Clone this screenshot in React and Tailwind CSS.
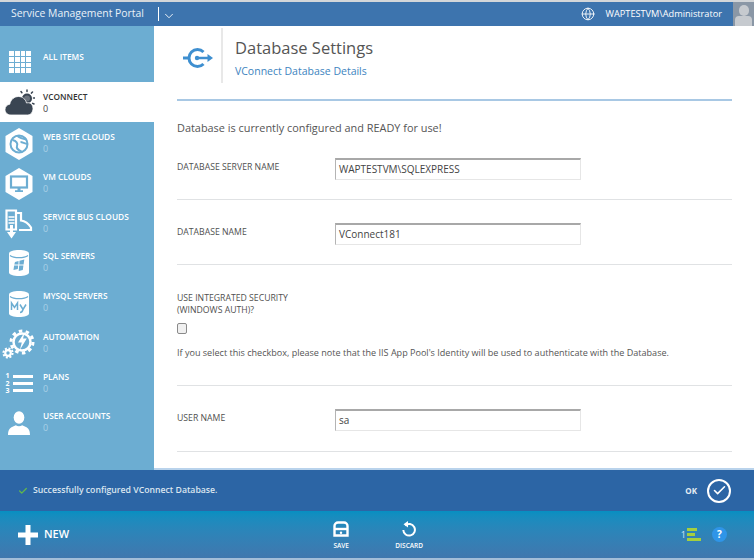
import React from 'react'
import { ChevronDown, Globe, Check } from 'lucide-react'

const FONT = '[font-family:"Open_Sans",sans-serif]'

function GridIcon() {
  return (
    <div className="grid grid-cols-4 gap-px w-[22px] h-[22px]">
      {Array.from({ length: 16 }).map((_, i) => <div key={i} className="bg-white" />)}
    </div>
  )
}

function CloudIcon() {
  return (
    <svg width="30" height="26" viewBox="0 0 30 26" fill="#3a4552">
      <g stroke="#3a4552" strokeWidth="1.500" strokeLinecap="round" strokeDasharray="1.500 1.800" fill="none">
        <path d="M22 1v3M27.500 3l-1.800 2M30 9h-2.500M16 2.500l1.500 2M29 15l-2-1" />
      </g>
      <circle cx="22" cy="9.500" r="5" />
      <circle cx="22" cy="9.500" r="3" fill="#fff" opacity="0.25" />
      <path d="M6 26C2.500 26 0 23.600 0 20.500 0 17.700 2 15.600 4.800 15.200 5.500 10.500 9.500 7.500 13.500 7.500c4 0 7.200 2.800 8 6.500 .6-.2 1.100-.3 1.700-.3 2.900 0 4.800 2.400 4.800 5.800 0 3.700-2.400 6.500-5.500 6.500z" stroke="#fff" strokeWidth="0.800" />
    </svg>
  )
}

function Hexagon({ children }) {
  return (
    <svg width="28" height="32" viewBox="0 0 28 32">
      <path d="M14 0l13.500 8v16L14 32 .5 24V8z" fill="#fff" />
      {children}
    </svg>
  )
}

function WebIcon() {
  return (
    <Hexagon>
      <circle cx="14" cy="16" r="8.500" fill="none" stroke="#6cadd2" strokeWidth="2" />
      <path d="M7.500 12c4 1 5.500 3.500 4.500 6s1 4 4.500 5.500M12.500 8c3 2.500 6 3 9 3.500M15.500 14c2 0 4.500 2 7 2" fill="none" stroke="#6cadd2" strokeWidth="2" />
    </Hexagon>
  )
}

function VmIcon() {
  return (
    <Hexagon>
      <rect x="6" y="8.500" width="16" height="11" fill="none" stroke="#6cadd2" strokeWidth="2.200" />
      <path d="M12.500 20h3v2.200h2.500v1.800h-8v-1.800h2.500z" fill="#6cadd2" />
    </Hexagon>
  )
}

function BusIcon() {
  return (
    <svg width="28" height="30" viewBox="0 0 28 30" fill="none" stroke="#fff" strokeWidth="2.200">
      <path d="M1.500 1.500h9.500v19H1.500z" />
      <path d="M11 4h5v7.500c4 .5 7.500 3 10 7v2.500H14" />
      <path d="M3.500 8h6M3.500 11h6M3.500 14h6" strokeWidth="1.700" />
      <path d="M6.500 16v8" strokeWidth="3" />
      <path d="M2 23h9l-4.500 6.500z" fill="#fff" stroke="none" />
    </svg>
  )
}

function DbShape({ children }) {
  return (
    <svg width="22" height="28" viewBox="0 0 22 28">
      <path d="M1 4.500C1 2.300 5.500 1 11 1s10 1.300 10 3.500v19c0 2.200-4.500 3.500-10 3.500S1 25.700 1 23.500z" fill="#fff" />
      <path d="M2 6.500c2 1.500 5 2.200 9 2.200s7-.7 9-2.200" fill="none" stroke="#6cadd2" strokeWidth="1.300" />
      {children}
    </svg>
  )
}

function SqlIcon() {
  return (
    <DbShape>
      <path d="M7 13l3.500-1v3.500H6.300zM11.500 11.800l4.800-1.300-.7 5H11.300zM6.100 16.500h4.100l-.4 3.600-4.300 1zM11.200 16.500h4.200l-.6 4.600-4.100 1z" fill="#6cadd2" />
    </DbShape>
  )
}

function MysqlIcon() {
  return (
    <DbShape>
      <path d="M3.500 20v-7l3 4.500 3-4.500v7M12 14.500l3 5 3-5M15 19.500c-.5 2-1.500 3-3 3" fill="none" stroke="#6cadd2" strokeWidth="1.500" />
    </DbShape>
  )
}

function AutomationIcon() {
  return (
    <svg width="34" height="30" viewBox="0 0 34 30">
      <circle cx="20" cy="13" r="8.500" fill="none" stroke="#fff" strokeWidth="2.500" />
      <circle cx="20" cy="13" r="11" fill="none" stroke="#fff" strokeWidth="3" strokeDasharray="3.500 3.400" />
      <path d="M23 2.500l-7 11h3.800l-2 7.500 7-11.500H21z" fill="#fff" />
      <circle cx="6" cy="24" r="2.800" fill="none" stroke="#fff" strokeWidth="2.200" />
      <circle cx="6" cy="24" r="4.600" fill="none" stroke="#fff" strokeWidth="2" strokeDasharray="2 1.600" />
    </svg>
  )
}

function PlansIcon() {
  return (
    <div className="flex items-center gap-[3px] text-white">
      <div className="flex flex-col text-[7px] leading-[7.500px] font-bold">
        <span>1</span><span>2</span><span>3</span>
      </div>
      <div className="flex flex-col gap-[4px]">
        <div className="w-[20px] h-[3px] bg-white" />
        <div className="w-[20px] h-[3px] bg-white" />
        <div className="w-[20px] h-[3px] bg-white" />
      </div>
    </div>
  )
}

function UserIcon() {
  return (
    <svg width="22" height="24" viewBox="0 0 24 26" fill="#fff">
      <ellipse cx="12" cy="7" rx="5.800" ry="6.800" />
      <path d="M0 26c0-5 1.500-7.500 5-9l3.500-1.500c2 1.300 5 1.300 7 0l3.500 1.500c3.500 1.500 5 4 5 9z" />
    </svg>
  )
}

const NAV = [
  { label: 'WEB SITE CLOUDS', icon: <WebIcon />, h: 'h-[40px]' },
  { label: 'VM CLOUDS', icon: <VmIcon />, h: 'h-[40px]' },
  { label: 'SERVICE BUS CLOUDS', icon: <BusIcon />, h: 'h-[39px]' },
  { label: 'SQL SERVERS', icon: <SqlIcon />, h: 'h-[40px]' },
  { label: 'MYSQL SERVERS', icon: <MysqlIcon />, h: 'h-[41px]' },
  { label: 'AUTOMATION', icon: <AutomationIcon />, h: 'h-[40px]' },
  { label: 'PLANS', icon: <PlansIcon />, h: 'h-[39px]' },
  { label: 'USER ACCOUNTS', icon: <UserIcon />, h: 'h-[40px]' },
]

function NavItem({ item }) {
  return (
    <div className={`flex items-start ${item.h}`}>
      <div className="w-[43px] h-full flex items-center justify-center shrink-0 pr-[5px]">{item.icon}</div>
      <div className="pt-[7px]">
        <div className="text-[8.300px] leading-[12px] font-semibold text-white">{item.label}</div>
        <div className="text-[9px] leading-[12px] text-[#a9d0e6]">0</div>
      </div>
    </div>
  )
}

function Field({ label, value, rowClass }) {
  return (
    <div className={`flex items-start pt-[23px] border-b border-[#e0e2e4] ${rowClass}`}>
      <div className="w-[158px] mt-[3px] text-[8.700px] leading-[12px] font-medium text-[#505050]">{label}</div>
      <div className="w-[246px] h-[22px] flex items-center border border-t-2 border-[#e6e6e6] border-t-[#a8a8a8] border-l-[#b4b4b4] pl-[3px] text-[10px] text-[#444]">{value}</div>
    </div>
  )
}

export default function App() {
  return (
    <div className={`w-[754px] h-[560px] flex flex-col overflow-hidden bg-white ${FONT}`}>
      <div className="h-[2px] bg-[#d3d6d9]" />
      {/* top bar */}
      <div className="h-[24px] bg-[#3d74ae] flex items-center text-white shrink-0">
        <span className="ml-[11px] text-[10.400px] text-[#eaf2f8]">Service Management Portal</span>
        <div className="ml-[14px] w-px h-[14px] bg-white" />
        <ChevronDown size={14} strokeWidth={1.500} className="ml-[3px] mt-[3px]" />
        <Globe size={14} strokeWidth={1.500} className="ml-auto" />
        <span className="ml-[11px] text-[9.200px] font-medium">WAPTESTVM\Administrator</span>
        <div className="ml-[11px] w-[21px] h-[24px] bg-[#8a97a6] flex flex-col items-center overflow-hidden pt-[3px]">
          <div className="w-[10px] h-[11px] rounded-full bg-[#c6cacf]" />
          <div className="w-[17px] h-[10px] rounded-t-[4px] bg-[#c6cacf]" />
        </div>
      </div>

      <div className="flex-1 flex min-h-0">
        {/* sidebar */}
        <div className="w-[154px] shrink-0 bg-[#6cadd2] flex flex-col">
          <div className="h-[56px] flex items-start pt-[25px]">
            <div className="w-[43px] pl-[9px]"><GridIcon /></div>
            <span className="text-[8.300px] leading-[12px] font-semibold text-white">ALL ITEMS</span>
          </div>
          <div className="h-[40px] bg-white flex items-start">
            <div className="w-[43px] h-full flex items-start shrink-0 pl-[5px] pt-[7px]"><CloudIcon /></div>
            <div className="pt-[9px]">
              <div className="text-[8.300px] leading-[12px] font-semibold text-[#333]">VCONNECT</div>
              <div className="text-[9px] leading-[12px] text-[#444]">0</div>
            </div>
          </div>
          <div className="pt-[2px]">
            {NAV.map(item => <NavItem key={item.label} item={item} />)}
          </div>
        </div>

        {/* main */}
        <div className="flex-1 min-w-0 pl-[23px] pr-[22px] border-b-2 border-[#b9d3ec]">
          <div className="h-[75px] flex items-start border-b-2 border-[#a8c8e4]">
            <div className="w-[44px] h-[56px] mt-[2px] flex items-center">
              <svg width="30" height="22" viewBox="0 0 30 22" fill="none" className="ml-[6px] mt-[3px]" stroke="#3e8fd0" strokeWidth="3">
                <path d="M20.500 5a8.500 8.500 0 1 0 0 12" />
                <path d="M0 11h6" />
                <path d="M13 11h13" strokeWidth="2.500" />
                <circle cx="14" cy="11" r="2.200" fill="#3e8fd0" stroke="none" />
                <path d="M24.500 7l5.500 4-5.500 4z" fill="#3e8fd0" stroke="none" />
              </svg>
            </div>
            <div className="w-[2px] h-[55px] mt-[2px] bg-[#e8e8e8]" />
            <div className="ml-[12px] pt-[10px]">
              <div className="text-[16.500px] leading-[24px] text-[#555]">Database Settings</div>
              <div className="text-[10.500px] leading-[16px] mt-[3px] text-[#3d84c0]">VConnect Database Details</div>
            </div>
          </div>
          <div className="pt-[20px] text-[10.900px] leading-[14px] text-[#555]">Database is currently configured and READY for use!</div>
          <Field label="DATABASE SERVER NAME" value="WAPTESTVM\SQLEXPRESS" rowClass="h-[65px]" />
          <Field label="DATABASE NAME" value="VConnect181" rowClass="h-[65px]" />
          <div className="h-[121px] border-b border-[#e0e2e4] pt-[27px]">
            <div className="text-[8.700px] leading-[12px] font-medium text-[#505050]">USE INTEGRATED SECURITY<br />(WINDOWS AUTH)?</div>
            <div className="mt-[7px] w-[10px] h-[11px] rounded-[2px] border border-[#8a8a8a] bg-[#f0f0f0]" />
            <div className="mt-[12px] text-[9.050px] leading-[14px] text-[#555] whitespace-nowrap">If you select this checkbox, please note that the IIS App Pool's Identity will be used to authenticate with the Database.</div>
          </div>
          <Field label="USER NAME" value="sa" rowClass="h-[66px]" />
        </div>
      </div>

      {/* notification */}
      <div className="h-[41px] bg-[#2c65a5] flex items-center shrink-0">
        <Check size={10} strokeWidth={3} className="ml-[18px] text-[#62b94a]" />
        <span className="ml-[5px] text-[8.700px] font-semibold text-[#dbe6f0]">Successfully configured VConnect Database.</span>
        <span className="ml-auto text-[8px] font-bold text-[#e6edf4]">OK</span>
        <div className="ml-[10px] mr-[23px] w-[24px] h-[24px] rounded-full border-2 border-white flex items-center justify-center">
          <Check size={15} strokeWidth={2.500} className="text-white" />
        </div>
      </div>

      {/* footer */}
      <div className="h-[47px] bg-gradient-to-b from-[#068fc1] to-[#3f77ae] flex items-center text-white shrink-0 relative">
        <svg width="20" height="20" viewBox="0 0 20 20" fill="#fff" className="ml-[18px]">
          <path d="M7.500 0h5v7.500H20v5h-7.500V20h-5v-7.500H0v-5h7.500z" />
        </svg>
        <span className="ml-[6px] text-[11px] font-semibold">NEW</span>
        <div className="ml-[257px] w-[30px] flex flex-col items-center mt-[2px]">
          <svg width="16" height="16" viewBox="0 0 16 16" fill="none" stroke="#fff" strokeWidth="2.400">
            <path d="M1.500 5a3.500 3.500 0 0 1 3.500-3.500h6A3.500 3.500 0 0 1 14.500 5v9.500h-13z" />
            <path d="M2 8h12" />
            <circle cx="8" cy="11.800" r="1.200" fill="#fff" stroke="none" />
          </svg>
          <span className="mt-[5px] text-[6.500px] leading-[8px] font-semibold">SAVE</span>
        </div>
        <div className="ml-[33px] w-[40px] flex flex-col items-center mt-[2px]">
          <svg width="16" height="16" viewBox="0 0 16 16" fill="none" stroke="#fff" strokeWidth="2">
            <path d="M4.200 4.500A5.800 5.800 0 1 1 2.300 9" />
            <path d="M7 0v6.500L2.500 3.200z" fill="#fff" stroke="none" />
          </svg>
          <span className="mt-[5px] text-[6.500px] leading-[8px] font-semibold">DISCARD</span>
        </div>
        <span className="ml-auto text-[9px] text-[#d5e6f2]">1</span>
        <div className="ml-[1px] flex flex-col gap-[2px] w-[14px]">
          <div className="h-[3px] w-[10px] bg-[#a5cf3f]" />
          <div className="h-[3px] w-[8px] bg-[#a5cf3f]" />
          <div className="h-[3px] w-[14px] bg-[#a5cf3f]" />
        </div>
        <div className="ml-[11px] mr-[27px] w-[15px] h-[15px] rounded-full bg-[#2f95e8] flex items-center justify-center text-[10px] font-bold">?</div>
      </div>
      <div className="h-[2px] bg-[#a3bdd8] shrink-0" />
    </div>
  )
}
